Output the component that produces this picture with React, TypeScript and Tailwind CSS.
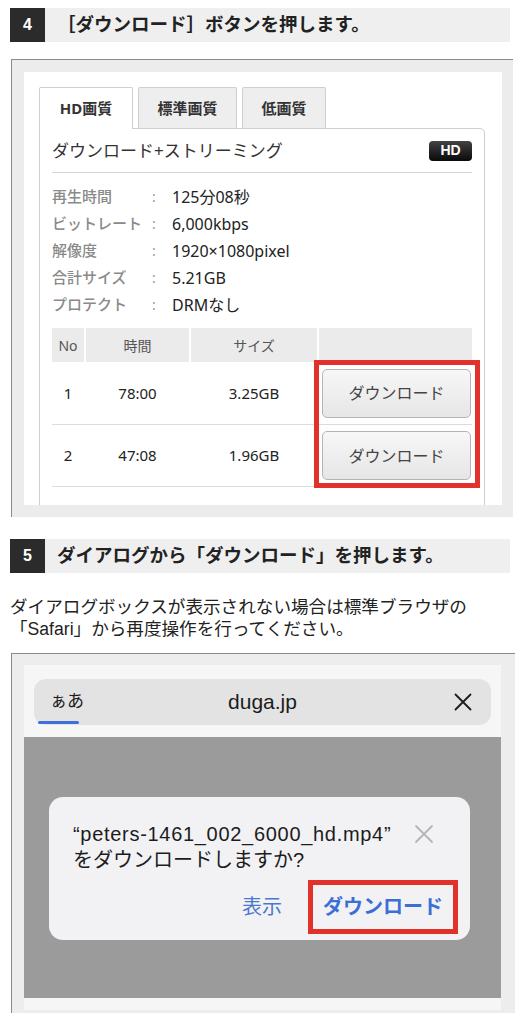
import React from 'react';

const jp = { fontFamily: '"Noto Sans", "Noto Sans CJK JP", sans-serif' };
const ios = { fontFamily: '"Liberation Sans", "Noto Sans CJK JP", sans-serif' };

const StepHeading: React.FC<{ num: string; text: string; className?: string }> = ({ num, text, className = '' }) => (
  <div className={`ml-[10px] w-[500px] h-[34px] flex bg-[#efefef] ${className}`}>
    <div className="w-[35px] h-full bg-[#2b2b2b] flex items-center justify-center text-white text-[16px] font-bold">
      {num}
    </div>
    <div className="pl-[12px] flex items-center text-[18.5px] font-bold text-[#222]">{text}</div>
  </div>
);

const infoRows = [
  ['再生時間', '125分08秒'],
  ['ビットレート', '6,000kbps'],
  ['解像度', '1920×1080pixel'],
  ['合計サイズ', '5.21GB'],
  ['プロテクト', 'DRMなし'],
];

const files = [
  { no: '1', time: '78:00', size: '3.25GB' },
  { no: '2', time: '47:08', size: '1.96GB' },
];

function DownloadPanel() {
  return (
    <div className="mt-[17px] ml-[11px] w-[502px] h-[458px] border-t border-l border-[#8a8a8a] bg-[#ececec] pt-[12px] pl-[12px]" style={jp}>
      <div className="w-[478px] h-[433px] bg-white overflow-hidden pt-[15px] pl-[15px]">
        {/* tabs */}
        <div className="flex gap-[5px] h-[41px] items-end">
          <div className="relative z-10 -mb-px w-[94px] h-[42px] bg-white border border-b-0 border-[#cfcfcf] rounded-t-[2px] flex items-center justify-center text-[15px] font-bold text-[#333]">
            HD画質
          </div>
          <div className="w-[99px] h-[41px] bg-[#eeeeee] border border-b-0 border-[#cfcfcf] rounded-t-[2px] flex items-center justify-center text-[15px] font-bold text-[#333]">
            標準画質
          </div>
          <div className="w-[84px] h-[41px] bg-[#eeeeee] border border-b-0 border-[#cfcfcf] rounded-t-[2px] flex items-center justify-center text-[15px] font-bold text-[#333]">
            低画質
          </div>
        </div>

        {/* panel */}
        <div className="w-[446px] h-[420px] border border-[#cfcfcf] rounded-tr-[5px] px-[12px]">
          <div className="h-[44px] flex items-center justify-between border-b border-[#d4d4d4]">
            <span className="text-[17px] text-[#333]">ダウンロード+ストリーミング</span>
            <span className="w-[43px] h-[20px] rounded-[4px] bg-gradient-to-b from-[#444] to-[#0a0a0a] text-white text-[14px] font-bold flex items-center justify-center" style={{ fontFamily: '"Liberation Sans", sans-serif' }}>
              HD
            </span>
          </div>

          <div className="mt-[10px]">
            {infoRows.map(([label, value]) => (
              <div key={label} className="h-[27px] flex items-center">
                <span className="w-[100px] text-[15px] font-medium text-[#8a8a8a]">{label}</span>
                <span className="w-[20px] text-[14px] text-[#999]">:</span>
                <span className="text-[16px] text-[#222]">{value}</span>
              </div>
            ))}
          </div>

          {/* file table */}
          <div className="relative mt-[10px] w-[420px]">
            <div className="grid grid-cols-[32px_103px_126px_1fr] gap-x-[2px] h-[34px] text-[14px] text-[#555]">
              <div className="bg-[#ebebeb] flex items-center justify-center">No</div>
              <div className="bg-[#ebebeb] flex items-center justify-center">時間</div>
              <div className="bg-[#ebebeb] flex items-center justify-center">サイズ</div>
              <div className="bg-[#ebebeb]" />
            </div>
            {files.map((f, i) => (
              <div
                key={f.no}
                className={`grid grid-cols-[32px_103px_126px_1fr] gap-x-[2px] border-b border-[#dcdcdc] text-[15px] text-[#222] ${i === 0 ? 'h-[63px]' : 'h-[62px]'}`}
              >
                <div className="flex items-center justify-center">{f.no}</div>
                <div className="flex items-center justify-center">{f.time}</div>
                <div className="flex items-center justify-center">{f.size}</div>
                <div className="flex items-center justify-end pr-px">
                  <button className="w-[149px] h-[49px] rounded-[5px] border border-[#b4b4b4] bg-gradient-to-b from-[#f7f7f7] to-[#e6e6e6] text-[16px] text-[#444]">
                    ダウンロード
                  </button>
                </div>
              </div>
            ))}
            <div className="absolute left-[262px] top-[32px] w-[166px] h-[128px] border-[5px] border-[#e0312a]" />
          </div>
        </div>
      </div>
    </div>
  );
}

function SafariDialog() {
  return (
    <div className="mt-[13px] ml-[11px] w-[504px] h-[360px] border-t border-l border-[#8a8a8a] bg-[#ededed] pt-[11px] pl-[12px]" style={ios}>
      <div className="w-[477px] h-[345px] bg-[#f6f6f6] pt-[14px]">
        {/* address bar */}
        <div className="relative mx-[10px] h-[46px] rounded-[12px] bg-[#e3e3e3] flex items-center px-[16px]">
          <span className="text-[17px] text-[#1c1c1c]">ぁあ</span>
          <span className="absolute left-1/2 -translate-x-1/2 text-[21px] text-[#1c1c1c]">duga.jp</span>
          <svg className="ml-auto mr-[3px]" width="18" height="18" viewBox="0 0 18 18" fill="none" stroke="#1c1c1c" strokeWidth="1.8" strokeLinecap="round">
            <path d="M1.5 1.5L16.5 16.5M16.5 1.5L1.5 16.5" />
          </svg>
          <div className="absolute left-[4px] bottom-[1px] w-[41px] h-[3px] rounded-full bg-[#3f6fd8]" />
        </div>

        {/* page area */}
        <div className="mt-[12px] h-[261px] bg-[#9b9b9b] pt-[60px] pl-[25px]">
          <div className="w-[421px] h-[143px] rounded-[14px] bg-[#f2f2f4] pt-[24px]">
            <div className="flex pl-[24px] pr-[36px]">
              <div className="text-[20px] leading-[26px] text-[#1c1c1c]">
                <div className="tracking-[0.7px]">“peters-1461_002_6000_hd.mp4”</div>
                <div>をダウンロードしますか?</div>
              </div>
              <svg className="ml-auto mt-[3px]" width="20" height="20" viewBox="0 0 20 20" fill="none" stroke="#b5b5b8" strokeWidth="1.8" strokeLinecap="round">
                <path d="M2 2L18 18M18 2L2 18" />
              </svg>
            </div>
            <div className="mt-[7px] flex items-center justify-end pr-[12px] gap-[26px]">
              <span className="text-[20px] text-[#4a78d0]">表示</span>
              <div className="h-[54px] px-[10px] border-[5px] border-[#e0312a] flex items-center text-[20px] font-bold text-[#3b6fd6]">
                ダウンロード
              </div>
            </div>
          </div>
        </div>
      </div>
    </div>
  );
}

export default function App() {
  return (
    <div className="w-[528px] h-[1024px] bg-white overflow-hidden pt-[8px]" style={ios}>
      <StepHeading num="4" text="［ダウンロード］ボタンを押します。" />
      <DownloadPanel />
      <StepHeading num="5" text="ダイアログから「ダウンロード」を押します。" className="mt-[22px]" />
      <p className="mt-[23px] ml-[10px] text-[17.6px] leading-[22px] text-[#222]">
        ダイアログボックスが表示されない場合は標準ブラウザの
        <br />
        「Safari」から再度操作を行ってください。
      </p>
      <SafariDialog />
    </div>
  );
}
